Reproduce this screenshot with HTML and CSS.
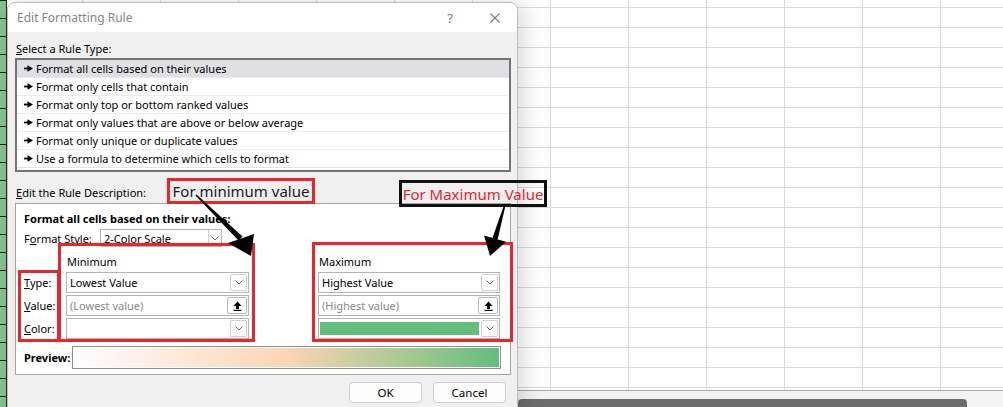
FILE: index.html
```html
<!DOCTYPE html>
<html lang="en">
<head>
<meta charset="utf-8">
<title>Edit Formatting Rule</title>
<link rel="stylesheet" href="styles.css">
</head>
<body>
<div class="sheet">
  <div class="strip"></div>
  <div class="grid">
    <div class="cells"></div>
    <div class="hscroll"><div class="thumb"></div></div>
  </div>
</div>

<div class="dialog">
  <div class="titlebar">
    <span class="title">Edit Formatting Rule</span>
    <span class="help">?</span>
    <svg class="close" width="10" height="10" viewBox="0 0 10 10"><path d="M0.5 0.5L9.5 9.5M9.5 0.5L0.5 9.5" stroke="#7a7a7a" stroke-width="1.1" fill="none"/></svg>
  </div>
  <div class="body">
    <div class="section-label"><u>S</u>elect a Rule Type:</div>
    <ul class="rule-list">
      <li class="rule sel"><svg class="bullet" width="9" height="7" viewBox="0 0 9 7"><rect x="0" y="2.6" width="5" height="1.8" fill="#000"/><path d="M3.5 0.3L9 3.5L3.5 6.7Z" fill="#000"/></svg>Format all cells based on their values</li>
      <li class="rule"><svg class="bullet" width="9" height="7" viewBox="0 0 9 7"><rect x="0" y="2.6" width="5" height="1.8" fill="#000"/><path d="M3.5 0.3L9 3.5L3.5 6.7Z" fill="#000"/></svg>Format only cells that contain</li>
      <li class="rule"><svg class="bullet" width="9" height="7" viewBox="0 0 9 7"><rect x="0" y="2.6" width="5" height="1.8" fill="#000"/><path d="M3.5 0.3L9 3.5L3.5 6.7Z" fill="#000"/></svg>Format only top or bottom ranked values</li>
      <li class="rule"><svg class="bullet" width="9" height="7" viewBox="0 0 9 7"><rect x="0" y="2.6" width="5" height="1.8" fill="#000"/><path d="M3.5 0.3L9 3.5L3.5 6.7Z" fill="#000"/></svg>Format only values that are above or below average</li>
      <li class="rule"><svg class="bullet" width="9" height="7" viewBox="0 0 9 7"><rect x="0" y="2.6" width="5" height="1.8" fill="#000"/><path d="M3.5 0.3L9 3.5L3.5 6.7Z" fill="#000"/></svg>Format only unique or duplicate values</li>
      <li class="rule last"><svg class="bullet" width="9" height="7" viewBox="0 0 9 7"><rect x="0" y="2.6" width="5" height="1.8" fill="#000"/><path d="M3.5 0.3L9 3.5L3.5 6.7Z" fill="#000"/></svg>Use a formula to determine which cells to format</li>
    </ul>

    <div class="desc-label"><u>E</u>dit the Rule Description:</div>
    <div class="panel">
      <div class="heading">Format all cells based on their values:</div>
      <div class="style-row">
        <span class="style-label">F<u>o</u>rmat Style:</span>
        <div class="combo small">
          <span class="combo-text">2-Color Scale</span>
          <span class="drop flat"><svg width="8" height="5" viewBox="0 0 8 5"><path d="M0.5 0.5L4 4L7.5 0.5" stroke="#666" fill="none"/></svg></span>
        </div>
      </div>

      <div class="groups">
        <div class="labels">
          <span class="lbl"><u>T</u>ype:</span>
          <span class="lbl"><u>V</u>alue:</span>
          <span class="lbl"><u>C</u>olor:</span>
        </div>
        <div class="group">
          <div class="group-title">Minimum</div>
          <div class="combo">
            <span class="combo-text">Lowest Value</span>
            <span class="drop"><svg width="8" height="5" viewBox="0 0 8 5"><path d="M0.5 0.5L4 4L7.5 0.5" stroke="#666" fill="none"/></svg></span>
          </div>
          <div class="combo">
            <span class="combo-text muted">(Lowest value)</span>
            <span class="upload"><svg width="9" height="10" viewBox="0 0 9 10"><path d="M4.5 0.5L8.5 5H6V8H3V5H0.5Z" fill="#000"/><rect x="0.5" y="8.8" width="8" height="1.2" fill="#000"/></svg></span>
          </div>
          <div class="combo">
            <span class="combo-text"></span>
            <span class="drop"><svg width="8" height="5" viewBox="0 0 8 5"><path d="M0.5 0.5L4 4L7.5 0.5" stroke="#666" fill="none"/></svg></span>
          </div>
        </div>
        <div class="group max">
          <div class="group-title">Maximum</div>
          <div class="combo">
            <span class="combo-text">Highest Value</span>
            <span class="drop"><svg width="8" height="5" viewBox="0 0 8 5"><path d="M0.5 0.5L4 4L7.5 0.5" stroke="#666" fill="none"/></svg></span>
          </div>
          <div class="combo">
            <span class="combo-text muted">(Highest value)</span>
            <span class="upload"><svg width="9" height="10" viewBox="0 0 9 10"><path d="M4.5 0.5L8.5 5H6V8H3V5H0.5Z" fill="#000"/><rect x="0.5" y="8.8" width="8" height="1.2" fill="#000"/></svg></span>
          </div>
          <div class="combo">
            <span class="swatch"></span>
            <span class="drop"><svg width="8" height="5" viewBox="0 0 8 5"><path d="M0.5 0.5L4 4L7.5 0.5" stroke="#666" fill="none"/></svg></span>
          </div>
        </div>
      </div>

      <div class="preview-row">
        <span class="preview-label">Preview:</span>
        <div class="preview-box"><div class="preview-fill"></div></div>
      </div>
    </div>

    <div class="buttons">
      <button class="btn">OK</button>
      <button class="btn">Cancel</button>
    </div>
  </div>
</div>

<div class="mark mark-labels"></div>
<div class="mark mark-min"></div>
<div class="mark mark-max"></div>
<div class="callout callout-min">For minimum value</div>
<div class="callout callout-max">For Maximum Value</div>

<svg class="arrows" width="1003" height="407" viewBox="0 0 1003 407">
  <path d="M195.5 195.6L196.6 194.4L242.5 236.5L238.5 240.5Z" fill="#000"/>
  <path d="M228 243L254 234L251 256Z" fill="#000"/>
  <path d="M504.4 204L505.8 204.2L497.6 239.5L492.4 238.3Z" fill="#000"/>
  <path d="M484 235.5L506 241.8L490 256Z" fill="#000"/>
</svg>
</body>
</html>
```

FILE: styles.css
```css
* { box-sizing: border-box; }

html, body {
  margin: 0;
  width: 1003px;
  height: 407px;
  overflow: hidden;
  background: #fff;
  font-family: "Noto Sans", "Open Sans", "Liberation Sans", sans-serif;
  font-size: 11px;
  color: #000;
}

body { position: relative; }

/* ---------- spreadsheet behind ---------- */
.sheet {
  display: flex;
  height: 407px;
}

.strip {
  width: 7px;
  border-right: 1px solid #2a2a2a;
  background: repeating-linear-gradient(to bottom, #1e1e1e 0 1px, #86c192 1px 18px);
}

.grid {
  flex: 1;
  display: flex;
  flex-direction: column;
}

.cells {
  flex: 1;
  background-image:
    linear-gradient(to right, #dadada 1px, transparent 1px),
    linear-gradient(to bottom, #dadada 1px, transparent 1px);
  background-size: 78px 100%, 100% 20px;
  background-position: 75px 0, 0 7px;
}

.hscroll {
  height: 17px;
  border-top: 1px solid #a8a8a8;
  background: #f3f3f3;
  display: flex;
  align-items: flex-end;
  padding-left: 511px;
}

.thumb {
  width: 449px;
  height: 8px;
  background: #6d6d6d;
  border-radius: 4px 4px 0 0;
}

/* ---------- dialog ---------- */
.dialog {
  position: absolute;
  left: 7px;
  top: 2px;
  width: 511px;
  height: 420px;
  background: #f0f0f0;
  border: 1px solid #bcbcbc;
  border-radius: 8px 8px 0 0;
  box-shadow: 6px 0 22px rgba(0, 0, 0, 0.15);
  overflow: hidden;
  display: flex;
  flex-direction: column;
}

.titlebar {
  flex: none;
  height: 29px;
  background: #fff;
  display: flex;
  align-items: center;
  padding-left: 9px;
  font-size: 12px;
  color: #868686;
}

.title { flex: 1; }

.help {
  font-size: 13px;
  margin-right: 37px;
  color: #7a7a7a;
}

.close { margin-right: 17px; }

.body {
  flex: 1;
  padding: 0 6px 0 7px;
}

.section-label {
  margin: 9px 0 1px 1px;
  line-height: 16px;
}

.rule-list {
  list-style: none;
  margin: 0;
  height: 114px;
  padding: 0 0 2px 0;
  border: 2px solid #747474;
  background: #fff;
}

.rule {
  height: 18px;
  border-bottom: 1px solid #ebebeb;
  display: flex;
  align-items: center;
  padding-left: 7px;
  white-space: nowrap;
}

.rule.sel { background: #dfdfe4; }
.rule.last { border-bottom-color: #e4e4e4; }

.bullet {
  flex: none;
  margin-right: 3px;
}

.desc-label {
  margin: 13px 0 2px 1px;
  line-height: 16px;
}

.panel {
  background: #fff;
  border: 1px solid #a5a5a5;
  padding: 7px 9px 5px 8px;
}

.heading {
  font-weight: bold;
  line-height: 16px;
}

.style-row {
  display: flex;
  align-items: center;
  margin-top: 2px;
  height: 18px;
}

.style-label { width: 76px; }

.combo {
  display: flex;
  align-items: center;
  height: 21px;
  border: 1px solid #b4b4b4;
  background: #fff;
}

.combo.small {
  width: 122px;
  height: 18px;
}

.combo-text {
  flex: 1;
  padding-left: 3px;
  white-space: nowrap;
}

.combo-text.muted { color: #8a8a8a; }

.drop {
  flex: none;
  width: 17px;
  height: 17px;
  margin-right: 1px;
  border: 1px solid #cfcfcf;
  border-radius: 2px;
  display: flex;
  align-items: center;
  justify-content: center;
}

.drop.flat {
  height: 16px;
  width: 13px;
  margin-right: 0;
  border-width: 0 0 0 1px;
  border-radius: 0;
}

.upload {
  flex: none;
  width: 20px;
  height: 17px;
  margin-right: 1px;
  border: 1px solid #b9b9b9;
  border-radius: 2px;
  display: flex;
  align-items: center;
  justify-content: center;
}

.swatch {
  flex: 1;
  height: 13px;
  margin: 0 2px 0 1px;
  background: #63be7b;
}

.groups {
  display: flex;
  margin-top: 7px;
}

.labels {
  width: 42px;
  padding-top: 18px;
  display: flex;
  flex-direction: column;
  gap: 2px;
}

.lbl {
  height: 21px;
  line-height: 21px;
}

.group {
  width: 183px;
  display: flex;
  flex-direction: column;
  gap: 2px;
}

.group.max {
  width: 182px;
  margin-left: 69px;
}

.group-title {
  height: 16px;
  line-height: 16px;
  padding-left: 1px;
}

.preview-row {
  display: flex;
  align-items: center;
  margin-top: 7px;
}

.preview-label {
  width: 48px;
  font-weight: bold;
}

.preview-box {
  flex: 1;
  height: 23px;
  border: 1px solid #8f8f8f;
  padding: 1px;
  background: #fff;
}

.preview-fill {
  height: 100%;
  background: linear-gradient(to right, #fdfdff 0%, #fcd5b4 50%, #63be7b 100%);
}

.buttons {
  display: flex;
  justify-content: flex-end;
  gap: 11px;
  margin-top: 7px;
  padding-right: 5px;
}

.btn {
  width: 73px;
  height: 21px;
  font: inherit;
  font-size: 11.5px;
  color: #000;
  background: #fdfdfd;
  border: 1px solid #cfcfcf;
  border-radius: 4px;
  padding: 0;
}

/* ---------- annotations ---------- */
.mark {
  position: absolute;
  border: 3px solid #e8262c;
}

.mark-labels { left: 18px; top: 270px; width: 42px; height: 72px; }
.mark-min { left: 58px; top: 243px; width: 197px; height: 99px; }
.mark-max { left: 312px; top: 242px; width: 201px; height: 100px; }

.callout {
  position: absolute;
  border: 3px solid;
  display: flex;
  align-items: center;
  justify-content: center;
  font-size: 15px;
  white-space: nowrap;
}

.callout-min {
  left: 167px;
  top: 178px;
  width: 148px;
  height: 26px;
  border-color: #e8262c;
  color: #1a1a1a;
}

.callout-max {
  left: 399px;
  top: 180px;
  width: 148px;
  height: 27px;
  border-color: #111;
  color: #e8262c;
}

.arrows {
  position: absolute;
  left: 0;
  top: 0;
  pointer-events: none;
}
```
